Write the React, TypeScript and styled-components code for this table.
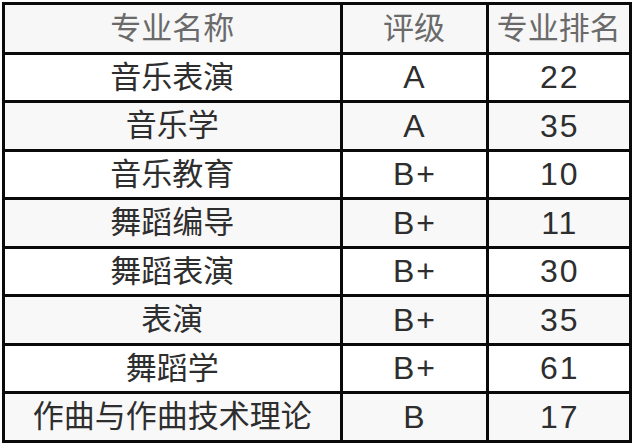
import styled, { createGlobalStyle } from 'styled-components';

const GlobalStyle = createGlobalStyle`
  html, body {
    margin: 0;
    padding: 0;
    background: #ffffff;
  }
  body {
    font-family: "Liberation Sans", "Noto Sans CJK SC", sans-serif;
  }
`;

const Page = styled.div`
  padding: 2px 0 0 2px;
`;

const Table = styled.table`
  border-collapse: collapse;
  table-layout: fixed;
  border: 3px solid #0a0a0a;
`;

const HeadRow = styled.tr`
  height: 49.5px;
  background: #f7f7f7;
`;

const HeadCell = styled.th<{ $w: number }>`
  width: ${({ $w }) => $w}px;
  border: 3px solid #0a0a0a;
  color: #6a6a6a;
  font-weight: 400;
  font-size: 31px;
  text-align: center;
  padding: 0;
  line-height: 1;
`;

const Row = styled.tr<{ $shade: boolean }>`
  height: 48.5px;
  background: ${({ $shade }) => ($shade ? '#f8f8f8' : '#ffffff')};
`;

const Cell = styled.td<{ $latin?: boolean }>`
  border: 3px solid #0a0a0a;
  color: #2e2e2e;
  font-size: ${({ $latin }) => ($latin ? 32 : 31)}px;
  letter-spacing: ${({ $latin }) => ($latin ? 2 : 0)}px;
  text-indent: ${({ $latin }) => ($latin ? 2 : 0)}px;
  text-align: center;
  padding: 0;
  line-height: 1;
`;

const rows = [
  { name: '音乐表演', grade: 'A', rank: '22' },
  { name: '音乐学', grade: 'A', rank: '35' },
  { name: '音乐教育', grade: 'B+', rank: '10' },
  { name: '舞蹈编导', grade: 'B+', rank: '11' },
  { name: '舞蹈表演', grade: 'B+', rank: '30' },
  { name: '表演', grade: 'B+', rank: '35' },
  { name: '舞蹈学', grade: 'B+', rank: '61' },
  { name: '作曲与作曲技术理论', grade: 'B', rank: '17' },
];

const App = () => {
  return (
    <>
      <GlobalStyle />
      <Page>
        <Table>
          <thead>
            <HeadRow>
              <HeadCell $w={334.5}>专业名称</HeadCell>
              <HeadCell $w={143}>评级</HeadCell>
              <HeadCell $w={140.5}>专业排名</HeadCell>
            </HeadRow>
          </thead>
          <tbody>
            {rows.map((r, i) => (
              <Row key={r.name} $shade={i % 2 === 1}>
                <Cell>{r.name}</Cell>
                <Cell $latin>{r.grade}</Cell>
                <Cell $latin>{r.rank}</Cell>
              </Row>
            ))}
          </tbody>
        </Table>
      </Page>
    </>
  );
};

export default App;
